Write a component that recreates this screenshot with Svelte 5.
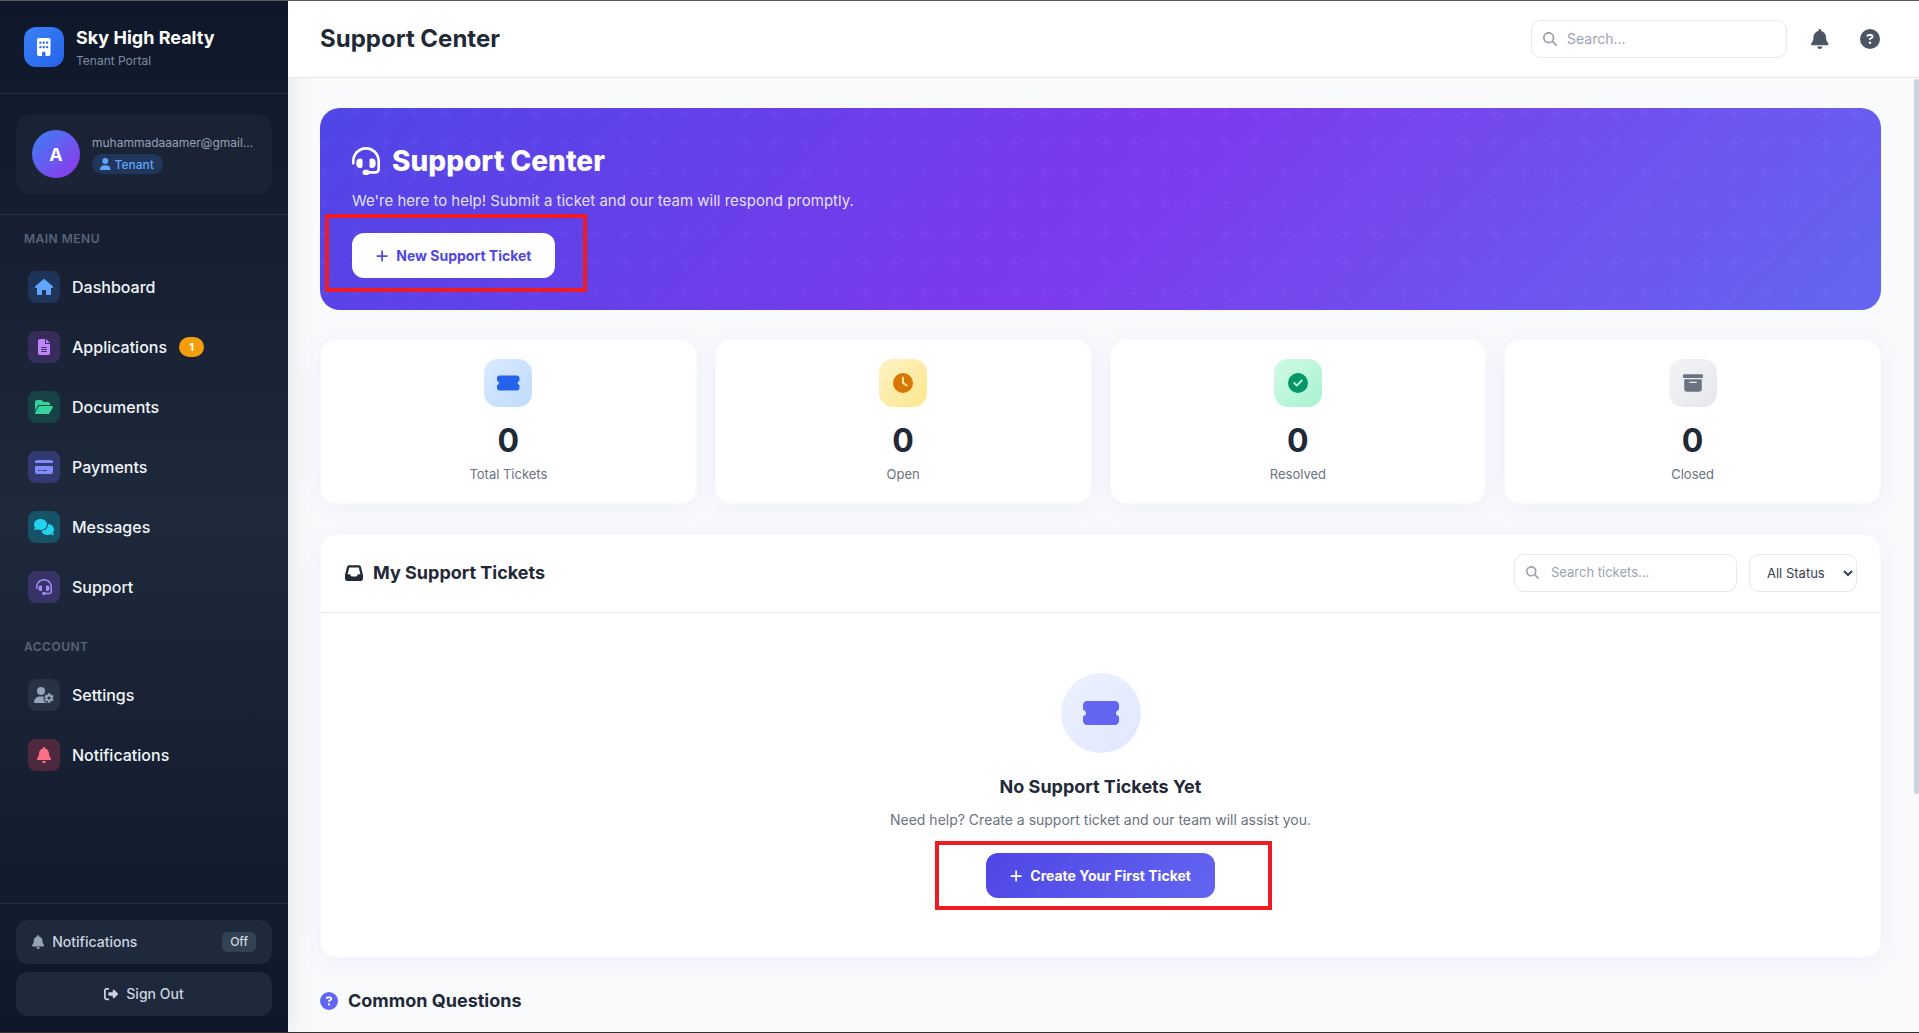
<script lang="ts">
  const icons: Record<string, { w: number; d: string }> = {
    building: { w: 384, d: 'M48 0C21.5 0 0 21.5 0 48V464c0 26.5 21.5 48 48 48h96V432c0-26.5 21.5-48 48-48s48 21.5 48 48v80h96c26.5 0 48-21.5 48-48V48c0-26.5-21.5-48-48-48H48zM64 240c0-8.8 7.2-16 16-16h32c8.8 0 16 7.2 16 16v32c0 8.8-7.2 16-16 16H80c-8.8 0-16-7.2-16-16V240zm112-16h32c8.8 0 16 7.2 16 16v32c0 8.8-7.2 16-16 16H176c-8.8 0-16-7.2-16-16V240c0-8.8 7.2-16 16-16zm80 16c0-8.8 7.2-16 16-16h32c8.8 0 16 7.2 16 16v32c0 8.8-7.2 16-16 16H272c-8.8 0-16-7.2-16-16V240zM80 96h32c8.8 0 16 7.2 16 16v32c0 8.8-7.2 16-16 16H80c-8.8 0-16-7.2-16-16V112c0-8.8 7.2-16 16-16zm80 16c0-8.8 7.2-16 16-16h32c8.8 0 16 7.2 16 16v32c0 8.8-7.2 16-16 16H176c-8.8 0-16-7.2-16-16V112zM272 96h32c8.8 0 16 7.2 16 16v32c0 8.8-7.2 16-16 16H272c-8.8 0-16-7.2-16-16V112c0-8.8 7.2-16 16-16z' },
    house: { w: 576, d: 'M575.8 255.5c0 18-15 32.1-32 32.1h-32l.7 160.2c0 2.7-.2 5.4-.5 8.1V472c0 22.1-17.9 40-40 40H456c-1.1 0-2.2 0-3.3-.1c-1.4 .1-2.8 .1-4.2 .1H416 392c-22.1 0-40-17.9-40-40V448 384c0-17.7-14.3-32-32-32H256c-17.7 0-32 14.3-32 32v64 24c0 22.1-17.9 40-40 40H160 128.1c-1.5 0-3-.1-4.5-.2c-1.2 .1-2.4 .2-3.6 .2H104c-22.1 0-40-17.9-40-40V360c0-.9 0-1.9 .1-2.8V287.6H32c-18 0-32-14-32-32.1c0-9 3-17 10-24L266.4 8c7-7 15-8 22-8s15 2 21 7L564.8 231.5c8 7 12 15 11 24z' },
    file: { w: 384, d: 'M64 0C28.7 0 0 28.7 0 64V448c0 35.3 28.7 64 64 64H320c35.3 0 64-28.7 64-64V160H256c-17.7 0-32-14.3-32-32V0H64zM256 0V128H384L256 0zM112 256H272c8.8 0 16 7.2 16 16s-7.2 16-16 16H112c-8.8 0-16-7.2-16-16s7.2-16 16-16zm0 64H272c8.8 0 16 7.2 16 16s-7.2 16-16 16H112c-8.8 0-16-7.2-16-16s7.2-16 16-16zm0 64H272c8.8 0 16 7.2 16 16s-7.2 16-16 16H112c-8.8 0-16-7.2-16-16s7.2-16 16-16z' },
    folder: { w: 576, d: 'M88.7 223.8L0 375.8V96C0 60.7 28.7 32 64 32H181.5c17 0 33.3 6.7 45.3 18.7l26.5 26.5c12 12 28.3 18.7 45.3 18.7H416c35.3 0 64 28.7 64 64v32H144c-22.8 0-43.8 12.1-55.3 31.8zm27.6 16.1C122.1 230 132.6 224 144 224H544c11.5 0 22 6.1 27.7 16.1s5.7 22.2-.1 32.1l-112 192C453.9 474 443.4 480 432 480H32c-11.5 0-22-6.1-27.7-16.1s-5.7-22.2 .1-32.1l112-192z' },
    card: { w: 576, d: 'M64 32C28.7 32 0 60.7 0 96v32H576V96c0-35.3-28.7-64-64-64H64zM576 224H0V416c0 35.3 28.7 64 64 64H512c35.3 0 64-28.7 64-64V224zM112 352h64c8.8 0 16 7.2 16 16s-7.2 16-16 16H112c-8.8 0-16-7.2-16-16s7.2-16 16-16zm112 16c0-8.8 7.2-16 16-16H368c8.8 0 16 7.2 16 16s-7.2 16-16 16H240c-8.8 0-16-7.2-16-16z' },
    comments: { w: 640, d: 'M208 352c114.9 0 208-78.8 208-176S322.9 0 208 0S0 78.8 0 176c0 38.6 14.7 74.3 39.6 103.4c-3.5 9.4-8.7 17.7-14.2 24.7c-4.8 6.2-9.7 11-13.3 14.3c-1.8 1.6-3.3 2.9-4.3 3.7c-.5 .4-.9 .7-1.1 .8l-.2 .2 0 0 0 0C1 327.2-1.4 334.4 .8 340.9S9.1 352 16 352c21.8 0 43.8-5.6 62.1-12.5c9.2-3.5 17.8-7.4 25.3-11.4C134.1 343.3 169.8 352 208 352zM448 176c0 112.3-99.1 196.9-216.5 207C255.8 457.4 336.4 512 432 512c38.2 0 73.9-8.7 104.7-23.9c7.5 4 16 7.9 25.2 11.4c18.3 6.9 40.3 12.5 62.1 12.5c6.9 0 13.1-4.5 15.2-11.1c2.1-6.6-.2-13.8-5.8-17.9l0 0 0 0-.2-.2c-.2-.2-.6-.4-1.1-.8c-1-.8-2.5-2-4.3-3.7c-3.6-3.3-8.5-8.1-13.3-14.3c-5.5-7-10.7-15.4-14.2-24.7c24.9-29 39.6-64.7 39.6-103.4c0-92.8-84.9-168.9-192.6-175.5c.4 5.1 .6 10.3 .6 15.5z' },
    headset: { w: 512, d: 'M256 48C141.1 48 48 141.1 48 256v40c0 13.3-10.7 24-24 24s-24-10.7-24-24V256C0 114.6 114.6 0 256 0S512 114.6 512 256V400.1c0 48.6-39.4 88-88.1 88L313.6 488c-8.3 14.3-23.8 24-41.6 24H240c-26.5 0-48-21.5-48-48s21.5-48 48-48h32c17.8 0 33.3 9.7 41.6 24l110.4 .1c22.1 0 40-17.9 40-40V256c0-114.9-93.1-208-208-208zM144 208h16c17.7 0 32 14.3 32 32V352c0 17.7-14.3 32-32 32H144c-35.3 0-64-28.7-64-64V272c0-35.3 28.7-64 64-64zm224 0c35.3 0 64 28.7 64 64v48c0 35.3-28.7 64-64 64H352c-17.7 0-32-14.3-32-32V240c0-17.7 14.3-32 32-32h16z' },
    usergear: { w: 640, d: 'M224 0a128 128 0 1 1 0 256A128 128 0 1 1 224 0zM178.3 304h91.4c11.8 0 23.4 1.2 34.5 3.3c-2.1 18.5 7.4 35.6 21.8 44.8c-16.6 10.6-26.7 31.6-20 53.3c4 12.9 9.4 25.5 16.4 37.6s15.2 23.1 24.4 33c15.7 16.9 39.6 18.4 57.2 8.7v.9c0 9.2 2.7 18.5 7.9 26.3H29.7C13.3 512 0 498.7 0 482.3C0 383.8 79.8 304 178.3 304zM436 218.2c0-7 4.5-13.3 11.3-14.8c10.5-2.4 21.5-3.7 32.7-3.7s22.2 1.3 32.7 3.7c6.8 1.5 11.3 7.8 11.3 14.8v30.6c7.9 3.4 15.4 7.7 22.3 12.8l24.9-14.3c6.1-3.5 13.7-2.7 18.5 2.4c7.6 8.1 14.3 17.2 20.1 27.2s10.3 20.4 13.5 31c2.1 6.7-1.1 13.7-7.2 17.2l-25 14.4c.4 4 .7 8.1 .7 12.3s-.2 8.2-.7 12.3l25 14.4c6.1 3.5 9.2 10.5 7.2 17.2c-3.3 10.6-7.8 21-13.5 31s-12.5 19.1-20.1 27.2c-4.8 5.1-12.5 5.9-18.5 2.4l-24.9-14.3c-6.9 5.1-14.3 9.4-22.3 12.8l0 30.6c0 7-4.5 13.3-11.3 14.8c-10.5 2.4-21.5 3.7-32.7 3.7s-22.2-1.3-32.7-3.7c-6.8-1.5-11.3-7.8-11.3-14.8V454.8c-8-3.4-15.6-7.7-22.5-12.9l-24.7 14.3c-6.1 3.5-13.7 2.7-18.5-2.4c-7.6-8.1-14.3-17.2-20.1-27.2s-10.3-20.4-13.5-31c-2.1-6.7 1.1-13.7 7.2-17.2l24.8-14.3c-.4-4.1-.7-8.2-.7-12.4s.2-8.3 .7-12.4L343.8 325c-6.1-3.5-9.2-10.5-7.2-17.2c3.3-10.6 7.7-21 13.5-31s12.5-19.1 20.1-27.2c4.8-5.1 12.4-5.9 18.5-2.4l24.8 14.3c6.9-5.1 14.5-9.4 22.5-12.9V218.2zm92.1 133.5a48.1 48.1 0 1 0 -96.1 0 48.1 48.1 0 1 0 96.1 0z' },
    bell: { w: 448, d: 'M224 0c-17.7 0-32 14.3-32 32V51.2C119 66 64 130.6 64 208v18.8c0 47-17.3 92.4-48.5 127.6l-7.4 8.3c-8.4 9.4-10.4 22.9-5.3 34.4S19.4 416 32 416H416c12.6 0 24-7.4 29.2-18.9s3.1-25-5.3-34.4l-7.4-8.3C401.3 319.2 384 273.9 384 226.8V208c0-77.4-55-142-128-156.8V32c0-17.7-14.3-32-32-32zm45.3 493.3c12-12 18.7-28.3 18.7-45.3H224 160c0 17 6.7 33.3 18.7 45.3s28.3 18.7 45.3 18.7s33.3-6.7 45.3-18.7z' },
    user: { w: 448, d: 'M224 256A128 128 0 1 0 224 0a128 128 0 1 0 0 256zm-45.7 48C79.8 304 0 383.8 0 482.3C0 498.7 13.3 512 29.7 512H418.3c16.4 0 29.7-13.3 29.7-29.7C448 383.8 368.2 304 269.7 304H178.3z' },
    signout: { w: 512, d: 'M377.9 105.9L500.7 228.7c7.2 7.2 11.3 17.1 11.3 27.3s-4.1 20.1-11.3 27.3L377.9 406.1c-6.4 6.4-15 9.9-24 9.9c-18.7 0-33.9-15.2-33.9-33.9l0-62.1-128 0c-17.7 0-32-14.3-32-32l0-64c0-17.7 14.3-32 32-32l128 0 0-62.1c0-18.7 15.2-33.9 33.9-33.9c9 0 17.6 3.6 24 9.9zM160 96L96 96c-17.7 0-32 14.3-32 32l0 256c0 17.7 14.3 32 32 32l64 0c17.7 0 32 14.3 32 32s-14.3 32-32 32l-64 0c-53 0-96-43-96-96L0 128C0 75 43 32 96 32l64 0c17.7 0 32 14.3 32 32s-14.3 32-32 32z' },
    plus: { w: 448, d: 'M256 80c0-17.7-14.3-32-32-32s-32 14.3-32 32V224H48c-17.7 0-32 14.3-32 32s14.3 32 32 32H192V432c0 17.7 14.3 32 32 32s32-14.3 32-32V288H400c17.7 0 32-14.3 32-32s-14.3-32-32-32H256V80z' },
    ticket: { w: 576, d: 'M0 128C0 92.7 28.7 64 64 64H512c35.3 0 64 28.7 64 64v64c0 8.8-7.4 15.7-15.7 18.6C541.5 217.1 528 235 528 256s13.5 38.9 32.3 45.4c8.3 2.9 15.7 9.8 15.7 18.6v64c0 35.3-28.7 64-64 64H64c-35.3 0-64-28.7-64-64V320c0-8.8 7.4-15.7 15.7-18.6C34.5 294.9 48 277 48 256s-13.5-38.9-32.3-45.4C7.4 207.7 0 200.8 0 192V128z' },
    clock: { w: 512, d: 'M256 0a256 256 0 1 1 0 512A256 256 0 1 1 256 0zM232 120V256c0 8 4 15.5 10.7 20l96 64c11 7.4 25.9 4.4 33.3-6.7s4.4-25.9-6.7-33.3L280 243.2V120c0-13.3-10.7-24-24-24s-24 10.7-24 24z' },
    check: { w: 512, d: 'M256 512A256 256 0 1 0 256 0a256 256 0 1 0 0 512zM369 209L241 337c-9.4 9.4-24.6 9.4-33.9 0l-64-64c-9.4-9.4-9.4-24.6 0-33.9s24.6-9.4 33.9 0l47 47L335 175c9.4-9.4 24.6-9.4 33.9 0s9.4 24.6 0 33.9z' },
    archive: { w: 512, d: 'M32 32H480c17.7 0 32 14.3 32 32V96c0 17.7-14.3 32-32 32H32C14.3 128 0 113.7 0 96V64C0 46.3 14.3 32 32 32zm0 128H480V416c0 35.3-28.7 64-64 64H96c-35.3 0-64-28.7-64-64V160zm128 80c0 8.8 7.2 16 16 16H336c8.8 0 16-7.2 16-16s-7.2-16-16-16H176c-8.8 0-16 7.2-16 16z' },
    inbox: { w: 512, d: 'M121 32C91.6 32 66 52 58.9 80.5L1.9 308.4C.6 313.5 0 318.7 0 323.9V416c0 35.3 28.7 64 64 64H448c35.3 0 64-28.7 64-64V323.9c0-5.2-.6-10.4-1.9-15.5l-57-227.9C446 52 420.4 32 391 32H121zm0 64H391l48 192H387.8c-12.1 0-23.2 6.8-28.6 17.7l-14.3 28.6c-5.4 10.8-16.5 17.7-28.6 17.7H195.8c-12.1 0-23.2-6.8-28.6-17.7l-14.3-28.6c-5.4-10.8-16.5-17.7-28.6-17.7H73L121 96z' },
    question: { w: 512, d: 'M256 512A256 256 0 1 0 256 0a256 256 0 1 0 0 512zM169.8 165.3c7.9-22.3 29.1-37.3 52.8-37.3h58.3c34.9 0 63.1 28.3 63.1 63.1c0 22.6-12.1 43.5-31.7 54.8L280 264.4c-.2 13-10.9 23.6-24 23.6c-13.3 0-24-10.7-24-24V250.5c0-8.6 4.6-16.5 12.1-20.8l44.3-25.4c4.7-2.7 7.6-7.7 7.6-13.1c0-8.4-6.8-15.1-15.1-15.1H222.6c-3.4 0-6.4 2.1-7.5 5.3l-.4 1.2c-4.4 12.5-18.2 19-30.6 14.6s-19-18.2-14.6-30.6l.4-1.2zM224 352a32 32 0 1 1 64 0 32 32 0 1 1 -64 0z' },
    search: { w: 512, d: 'M416 208c0 45.9-14.9 88.3-40 122.7L502.6 457.4c12.5 12.5 12.5 32.8 0 45.3s-32.8 12.5-45.3 0L330.7 376c-34.4 25.2-76.8 40-122.7 40C93.1 416 0 322.9 0 208S93.1 0 208 0S416 93.1 416 208zM208 352a144 144 0 1 0 0-288 144 144 0 1 0 0 288z' }
  };

  const mainMenu = [
    { label: 'Dashboard', icon: 'house', tone: 'blue' },
    { label: 'Applications', icon: 'file', tone: 'purple', badge: '1' },
    { label: 'Documents', icon: 'folder', tone: 'green' },
    { label: 'Payments', icon: 'card', tone: 'indigo' },
    { label: 'Messages', icon: 'comments', tone: 'cyan' },
    { label: 'Support', icon: 'headset', tone: 'violet' }
  ];

  const accountMenu = [
    { label: 'Settings', icon: 'usergear', tone: 'slate' },
    { label: 'Notifications', icon: 'bell', tone: 'rose' }
  ];

  const stats = [
    { label: 'Total Tickets', value: 0, icon: 'ticket', tone: 'stat-blue' },
    { label: 'Open', value: 0, icon: 'clock', tone: 'stat-amber' },
    { label: 'Resolved', value: 0, icon: 'check', tone: 'stat-green' },
    { label: 'Closed', value: 0, icon: 'archive', tone: 'stat-grey' }
  ];
</script>

{#snippet icon(name: string, cls = '')}
  <svg class="fa {cls}" viewBox="0 0 {icons[name].w} 512" aria-hidden="true"><path d={icons[name].d} fill="currentColor" /></svg>
{/snippet}

{#snippet navGroup(items: any[])}
  <ul class="nav-list">
    {#each items as item}
      <li class="nav-item">
        <span class="nav-icon {item.tone}">{@render icon(item.icon)}</span>
        <span>{item.label}</span>
        {#if item.badge}<span class="nav-badge">{item.badge}</span>{/if}
      </li>
    {/each}
  </ul>
{/snippet}

<div class="shell">
  <aside class="sidebar">
    <div class="brand">
      <span class="brand-logo">{@render icon('building')}</span>
      <div class="brand-text">
        <div class="brand-name">Sky High Realty</div>
        <div class="brand-sub">Tenant Portal</div>
      </div>
    </div>

    <div class="user-wrap">
      <div class="user-card">
        <span class="avatar">A</span>
        <div class="user-meta">
          <div class="user-email">muhammadaaamer@gmail.com</div>
          <span class="role">{@render icon('user')} Tenant</span>
        </div>
      </div>
    </div>

    <nav class="nav">
      <p class="nav-label">Main Menu</p>
      {@render navGroup(mainMenu)}
      <p class="nav-label account">Account</p>
      {@render navGroup(accountMenu)}
    </nav>

    <div class="side-foot">
      <div class="foot-btn notif">
        {@render icon('bell')}
        <span>Notifications</span>
        <span class="off">Off</span>
      </div>
      <div class="foot-btn signout">
        {@render icon('signout')}
        <span>Sign Out</span>
      </div>
    </div>
  </aside>

  <div class="main">
    <header class="topbar">
      <h1 class="page-title">Support Center</h1>
      <label class="search top-search">
        {@render icon('search')}
        <input placeholder="Search..." />
      </label>
      <button type="button" class="top-btn">{@render icon('bell')}</button>
      <button type="button" class="top-btn">{@render icon('question')}</button>
    </header>

    <div class="content-wrap">
      <main class="content">
        <section class="hero">
          <h2>{@render icon('headset')} Support Center</h2>
          <p>We're here to help! Submit a ticket and our team will respond promptly.</p>
          <div class="marked">
            <button type="button" class="btn btn-white">{@render icon('plus')} New Support Ticket</button>
            <span class="mark mark-hero"></span>
          </div>
        </section>

        <section class="stats">
          {#each stats as stat}
            <div class="stat">
              <span class="stat-icon {stat.tone}">{@render icon(stat.icon)}</span>
              <div class="stat-value">{stat.value}</div>
              <div class="stat-label">{stat.label}</div>
            </div>
          {/each}
        </section>

        <section class="tickets">
          <div class="tickets-head">
            <h3>{@render icon('inbox')} My Support Tickets</h3>
            <div class="filters">
              <label class="search ticket-search">
                {@render icon('search')}
                <input placeholder="Search tickets..." />
              </label>
              <select class="status">
                <option>All Status</option>
                <option>Open</option>
                <option>Resolved</option>
                <option>Closed</option>
              </select>
            </div>
          </div>
          <div class="empty">
            <span class="empty-icon">{@render icon('ticket')}</span>
            <h4>No Support Tickets Yet</h4>
            <p>Need help? Create a support ticket and our team will assist you.</p>
            <div class="marked">
              <button type="button" class="btn btn-primary">{@render icon('plus')} Create Your First Ticket</button>
              <span class="mark mark-empty"></span>
            </div>
          </div>
        </section>

        <section class="faq">
          <h3>{@render icon('question')} Common Questions</h3>
        </section>
      </main>
      <span class="scroll-thumb"></span>
    </div>
  </div>
</div>

<style>
  :global(body) {
    margin: 0;
    font-family: Inter, "Noto Sans", sans-serif;
    background: #f8fafc;
  }

  * {
    box-sizing: border-box;
  }

  .fa {
    display: block;
    height: 1em;
    width: auto;
    flex: none;
  }

  .shell {
    display: flex;
    height: 100vh;
    border-top: 1px solid #5a5a5a;
    border-bottom: 1px solid #333;
    overflow: hidden;
  }

  /* sidebar */
  .sidebar {
    width: 288px;
    flex: none;
    display: flex;
    flex-direction: column;
    position: relative;
    z-index: 1;
    background: linear-gradient(180deg, #0f172a 0%, #1e293b 50%, #0f172a 100%);
    box-shadow: 4px 0 24px rgba(0, 0, 0, 0.08);
  }

  .brand {
    display: flex;
    align-items: center;
    gap: 12px;
    height: 93px;
    padding: 0 24px;
    border-bottom: 1px solid rgba(255, 255, 255, 0.08);
  }

  .brand-logo {
    display: grid;
    place-items: center;
    width: 40px;
    height: 40px;
    border-radius: 12px;
    background: linear-gradient(135deg, #3b82f6, #2563eb);
    color: #fff;
    font-size: 18px;
  }

  .brand-text {
    padding-top: 2px;
  }

  .brand-name {
    font-size: 18px;
    line-height: 24px;
    font-weight: 700;
    color: #fff;
  }

  .brand-sub {
    margin-top: 2px;
    font-size: 12px;
    line-height: 18px;
    color: #7b8ba1;
  }

  .user-wrap {
    padding: 20px 16px;
    border-bottom: 1px solid rgba(255, 255, 255, 0.08);
  }

  .user-card {
    display: flex;
    align-items: center;
    gap: 12px;
    height: 80px;
    padding: 0 16px;
    border-radius: 14px;
    background: rgba(255, 255, 255, 0.03);
  }

  .avatar {
    display: grid;
    place-items: center;
    flex: none;
    width: 48px;
    height: 48px;
    border-radius: 50%;
    background: linear-gradient(135deg, #3b82f6, #9333ea);
    color: #fff;
    font-size: 18px;
    font-weight: 700;
  }

  .user-meta {
    min-width: 0;
  }

  .user-email {
    overflow: hidden;
    white-space: nowrap;
    text-overflow: ellipsis;
    font-size: 12px;
    line-height: 18px;
    color: #94a3b8;
  }

  .role {
    display: inline-flex;
    align-items: center;
    gap: 4px;
    height: 20px;
    margin-top: 2px;
    padding: 0 9px 0 8px;
    border-radius: 10px;
    background: rgba(59, 130, 246, 0.2);
    color: #60a5fa;
    font-size: 12px;
    font-weight: 500;
  }

  .nav {
    padding: 17px 16px 0;
  }

  .nav-label {
    margin: 0 8px 17px;
    font-size: 12px;
    line-height: 14px;
    font-weight: 600;
    letter-spacing: 0.5px;
    text-transform: uppercase;
    color: #56657b;
  }

  .nav-label.account {
    margin-top: 29px;
  }

  .nav-list {
    display: flex;
    flex-direction: column;
    gap: 12px;
    margin: 0;
    padding: 0;
    list-style: none;
  }

  .nav-item {
    display: flex;
    align-items: center;
    gap: 12px;
    height: 48px;
    padding: 0 12px;
    color: #f1f5f9;
    font-size: 16px;
    font-weight: 500;
  }

  .nav-icon {
    display: grid;
    place-items: center;
    width: 32px;
    height: 32px;
    border-radius: 8px;
    font-size: 16px;
  }

  .blue { background: rgba(59, 130, 246, 0.2); color: #60a5fa; }
  .purple { background: rgba(168, 85, 247, 0.2); color: #c084fc; }
  .green { background: rgba(16, 185, 129, 0.2); color: #34d399; }
  .indigo { background: rgba(99, 102, 241, 0.3); color: #818cf8; }
  .cyan { background: rgba(6, 182, 212, 0.3); color: #22d3ee; }
  .violet { background: rgba(139, 92, 246, 0.25); color: #a78bfa; }
  .slate { background: rgba(148, 163, 184, 0.12); color: #94a3b8; }
  .rose { background: rgba(244, 63, 94, 0.25); color: #fb7185; }

  .nav-badge {
    display: grid;
    place-items: center;
    width: 25px;
    height: 20px;
    border-radius: 10px;
    background: #f59e0b;
    color: #fff;
    font-size: 11px;
    font-weight: 700;
  }

  .side-foot {
    display: flex;
    flex-direction: column;
    gap: 8px;
    margin-top: auto;
    padding: 16px;
    border-top: 1px solid rgba(255, 255, 255, 0.08);
  }

  .foot-btn {
    display: flex;
    align-items: center;
    height: 44px;
    padding-bottom: 1px;
    border-radius: 12px;
    background: #1e293b;
    color: #cbd5e1;
    font-size: 14px;
    font-weight: 500;
  }

  .notif {
    gap: 8px;
    padding-left: 16px;
    padding-right: 16px;
  }

  .notif .fa {
    color: #94a3b8;
    font-size: 14px;
  }

  .off {
    margin-left: auto;
    padding: 0 8px;
    line-height: 20px;
    border-radius: 5px;
    background: #334155;
    font-size: 12px;
  }

  .signout {
    justify-content: center;
    gap: 8px;
  }

  /* main column */
  .main {
    flex: 1;
    min-width: 0;
    display: flex;
    flex-direction: column;
  }

  .topbar {
    display: flex;
    align-items: center;
    flex: none;
    height: 77px;
    padding: 0 29px 0 32px;
    position: relative;
    z-index: 2;
    background: #fff;
    border-bottom: 1px solid #e5e7eb;
  }

  .page-title {
    flex: 1;
    margin: 0 0 2px;
    font-size: 24px;
    font-weight: 700;
    color: #1f2937;
  }

  .search {
    display: flex;
    align-items: center;
    gap: 10px;
    height: 38px;
    padding: 0 11px;
    background: #fff;
    border: 1px solid #e5e7eb;
    border-radius: 10px;
    color: #9ca3af;
    font-size: 14px;
  }

  .search input {
    flex: 1;
    min-width: 0;
    border: 0;
    outline: 0;
    padding: 0 0 1px;
    background: none;
    font: inherit;
    color: #374151;
  }

  .search input::placeholder {
    color: #9ca3af;
  }

  .top-search {
    width: 256px;
    margin-right: 13px;
  }

  .top-btn {
    display: grid;
    place-items: center;
    width: 40px;
    height: 40px;
    margin-left: 10px;
    padding: 0;
    border: 0;
    background: none;
    color: #4b5563;
    font-size: 20px;
  }

  .top-search + .top-btn {
    margin-left: 0;
  }

  .content-wrap {
    flex: 1;
    min-height: 0;
    position: relative;
  }

  .content {
    height: 100%;
    overflow: hidden;
    padding: 30px 38px 30px 32px;
  }

  .scroll-thumb {
    position: absolute;
    top: 1px;
    right: 0;
    width: 5px;
    height: 715px;
    border-radius: 3px;
    background: #cbd5e1;
  }

  /* hero */
  .hero {
    padding: 32px;
    border-radius: 20px;
    color: #fff;
    background-color: #6d3ce8;
    background-image:
      url("data:image/svg+xml,%3Csvg width='60' height='60' xmlns='http://www.w3.org/2000/svg'%3E%3Cpath fill='%23fff' fill-opacity='.03' d='M36 34v-4h-2v4h-4v2h4v4h2v-4h4v-2h-4zm0-30V0h-2v4h-4v2h4v4h2V6h4V4h-4zM6 34v-4H4v4H0v2h4v4h2v-4h4v-2H6zM6 4V0H4v4H0v2h4v4h2V6h4V4H6z'/%3E%3C/svg%3E"),
      linear-gradient(135deg, #4f46e5 0%, #7c3aed 50%, #6366f1 100%);
  }

  .hero h2 {
    display: flex;
    align-items: center;
    gap: 12px;
    margin: 0 0 8px;
    font-size: 28px;
    line-height: 42px;
    font-weight: 800;
  }

  .hero p {
    margin: 0 0 21px;
    font-size: 15px;
    line-height: 22px;
    color: rgba(255, 255, 255, 0.85);
  }

  .marked {
    position: relative;
    width: fit-content;
  }

  .mark {
    position: absolute;
    border: 4px solid #ed1c24;
    pointer-events: none;
  }

  .mark-hero {
    inset: -19px -32px -14px -27px;
  }

  .mark-empty {
    inset: -12px -57px -12px -51px;
  }

  .btn {
    display: flex;
    align-items: center;
    gap: 8px;
    height: 45px;
    padding: 0 24px;
    border: 0;
    border-radius: 12px;
    font: inherit;
    font-size: 14px;
    font-weight: 700;
  }

  .btn-white {
    background: #fff;
    color: #4f46e5;
  }

  .btn-primary {
    background: linear-gradient(135deg, #4f46e5, #6366f1);
    color: #fff;
  }

  /* stats */
  .stats {
    display: grid;
    grid-template-columns: repeat(4, minmax(0, 1fr));
    gap: 18px;
    margin-top: 29px;
  }

  .stat {
    display: flex;
    flex-direction: column;
    align-items: center;
    height: 165px;
    padding: 19px;
    border: 1px solid rgba(79, 70, 229, 0.04);
    border-radius: 16px;
    background: #fff;
    box-shadow: 0 4px 24px rgba(79, 70, 229, 0.06);
  }

  .stat-icon {
    display: grid;
    place-items: center;
    width: 48px;
    height: 48px;
    margin-bottom: 14px;
    border-radius: 14px;
    font-size: 20px;
  }

  .stat-blue { background: linear-gradient(135deg, #dbeafe, #bfdbfe); color: #2563eb; }
  .stat-amber { background: linear-gradient(135deg, #fef3c7, #fde68a); color: #d97706; }
  .stat-green { background: linear-gradient(135deg, #d1fae5, #a7f3d0); color: #059669; }
  .stat-grey { background: linear-gradient(135deg, #f3f4f6, #e5e7eb); color: #6b7280; }

  .stat-value {
    font-size: 32px;
    line-height: 40px;
    font-weight: 700;
    color: #1f2937;
  }

  .stat-label {
    margin-top: 3px;
    font-size: 13px;
    line-height: 20px;
    color: #6b7280;
  }

  /* tickets */
  .tickets {
    margin-top: 30px;
    border: 1px solid rgba(79, 70, 229, 0.04);
    border-radius: 16px;
    background: #fff;
    box-shadow: 0 4px 24px rgba(79, 70, 229, 0.06);
  }

  .tickets-head {
    display: flex;
    align-items: center;
    justify-content: space-between;
    height: 78px;
    padding: 0 23px 2px 24px;
    border-bottom: 1px solid #e5e7eb;
  }

  .tickets-head h3,
  .faq h3 {
    display: flex;
    align-items: center;
    gap: 10px;
    margin: 0;
    font-size: 18px;
    line-height: 28px;
    font-weight: 700;
    color: #1f2937;
  }

  .filters {
    display: flex;
    gap: 12px;
  }

  .ticket-search {
    width: 223px;
    font-size: 13px;
  }

  .ticket-search .fa {
    font-size: 13px;
  }

  .ticket-search input {
    margin-left: 2px;
  }

  .status {
    width: 108px;
    height: 38px;
    padding: 0 13px;
    border: 1px solid #e5e7eb;
    border-radius: 10px;
    background: #fff;
    color: #374151;
    font-family: inherit;
    font-size: 13px;
  }

  .empty {
    display: flex;
    flex-direction: column;
    align-items: center;
    padding: 60px 24px 59px;
  }

  .empty-icon {
    display: grid;
    place-items: center;
    width: 80px;
    height: 80px;
    border-radius: 50%;
    background: linear-gradient(135deg, #eef2ff, #e0e7ff);
    color: #6366f1;
    font-size: 32px;
  }

  .empty h4 {
    margin: 20px 0 8px;
    font-size: 18px;
    line-height: 28px;
    font-weight: 700;
    color: #1f2937;
  }

  .empty p {
    margin: 0 0 23px;
    font-size: 14px;
    line-height: 21px;
    color: #6b7280;
  }

  /* faq */
  .faq {
    margin-top: 29px;
  }

  .faq h3 .fa {
    color: #6366f1;
  }
</style>
